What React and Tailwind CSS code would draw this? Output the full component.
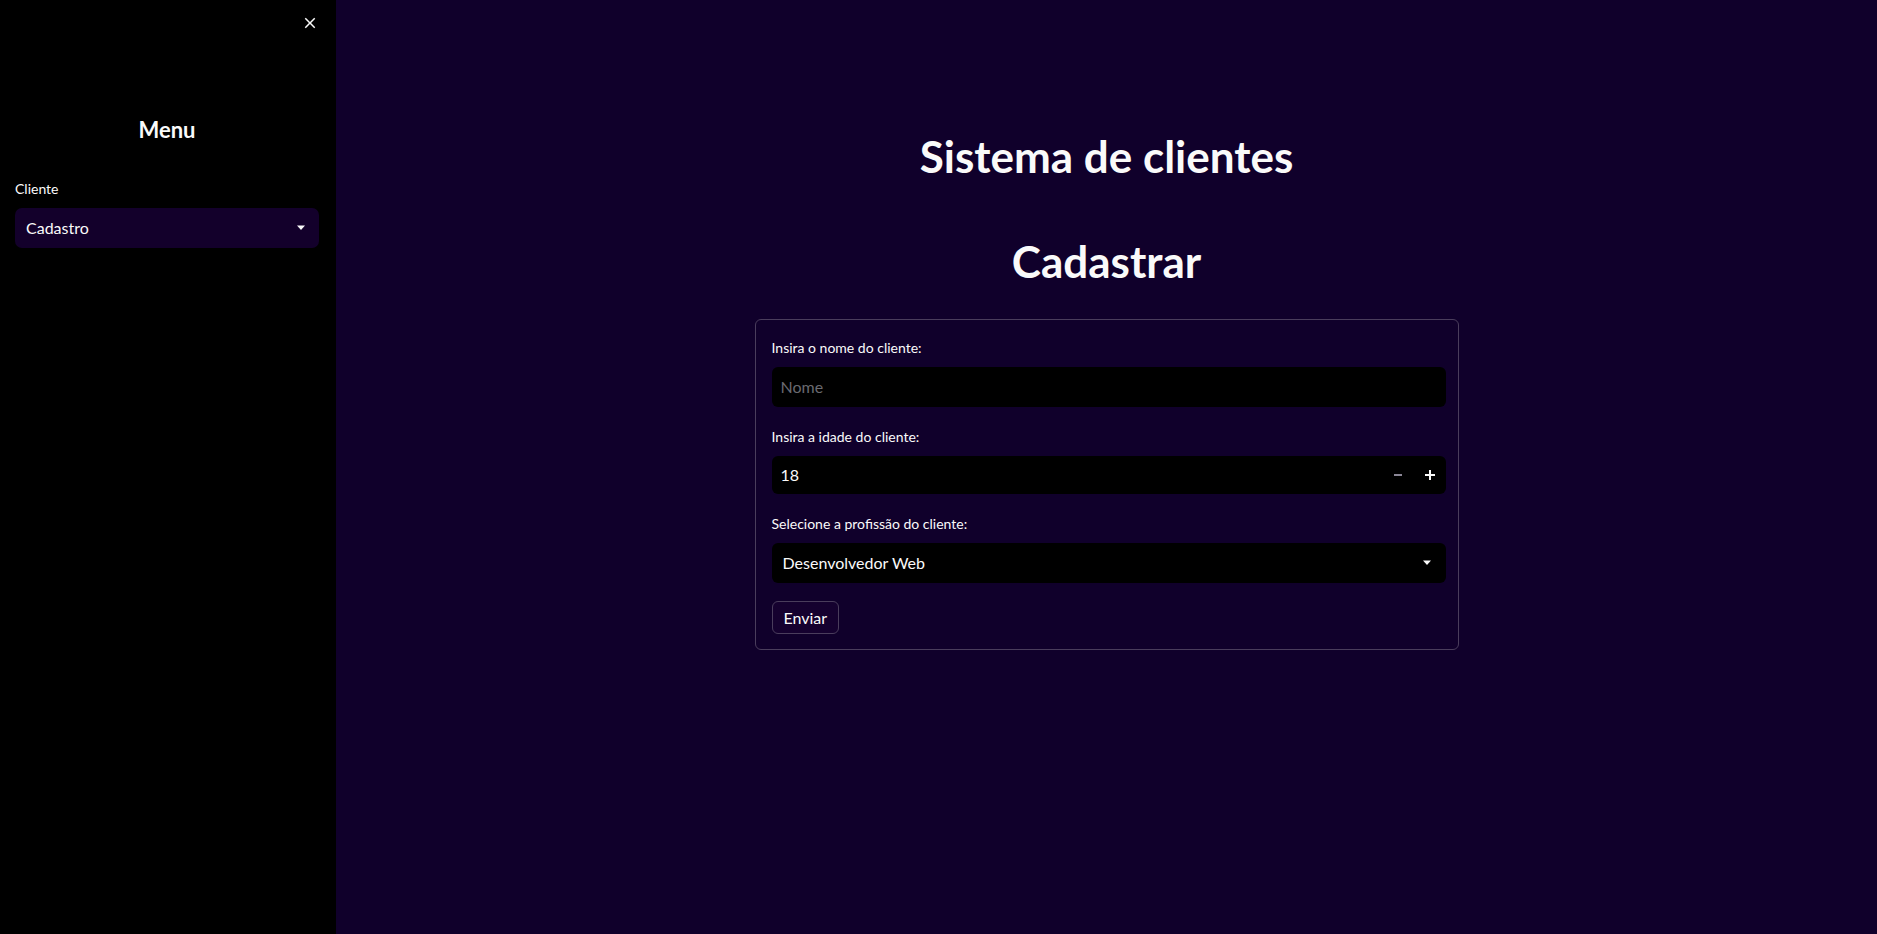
import React from "react";

function Caret() {
  return (
    <svg width="10" height="6" viewBox="0 0 10 6" className="shrink-0">
      <path d="M1 0.5h8L5 5z" fill="#fafafa" />
    </svg>
  );
}

function CloseIcon() {
  return (
    <svg width="18" height="18" viewBox="0 0 24 24">
      <path
        d="M19 6.41L17.59 5 12 10.59 6.41 5 5 6.41 10.59 12 5 17.59 6.41 19 12 13.41 17.59 19 19 17.59 13.41 12z"
        fill="#fafafa"
      />
    </svg>
  );
}

function Label({ children }) {
  return (
    <div className="h-[24px] flex items-center text-[14px] text-[#fafafa]">{children}</div>
  );
}

function Sidebar() {
  return (
    <aside className="w-[336px] shrink-0 bg-black min-h-screen pl-[15px] pr-[17px]">
      <div className="h-[46px] flex items-center justify-end">
        <CloseIcon />
      </div>
      <h2 className="mt-[68px] text-center text-[22px] leading-[32px] font-bold text-[#fafafa]">
        Menu
      </h2>
      <div className="mt-[30px]">
        <Label>Cliente</Label>
        <div className="mt-[8px] h-[40px] rounded-[7px] bg-[#13002b] flex items-center justify-between pl-[11px] pr-[13px]">
          <span className="text-[16px] text-[#fafafa]">Cadastro</span>
          <Caret />
        </div>
      </div>
    </aside>
  );
}

function ClientForm() {
  return (
    <div className="border border-[#4a3d5c] rounded-[6px] pl-[16px] pr-[12px] pt-[15px] pb-[15px]">
      <Label>Insira o nome do cliente:</Label>
      <div className="mt-[8px] h-[40px] rounded-[6px] bg-black flex items-center pl-[9px]">
        <span className="text-[16px] text-[#6a6a70]">Nome</span>
      </div>

      <div className="mt-[17px]">
        <Label>Insira a idade do cliente:</Label>
      </div>
      <div className="mt-[8px] h-[38px] rounded-[6px] bg-black flex items-center pl-[9px]">
        <span className="flex-1 text-[16px] text-[#fafafa]">18</span>
        <div className="w-[32px] h-full flex items-center justify-center">
          <span className="block w-[8px] h-[2px] bg-[#8a8696]" />
        </div>
        <div className="w-[32px] h-full flex items-center justify-center">
          <svg width="10" height="10" viewBox="0 0 10 10">
            <path d="M4 0h2v4h4v2H6v4H4V6H0V4h4z" fill="#fafafa" />
          </svg>
        </div>
      </div>

      <div className="mt-[17px]">
        <Label>Selecione a profissão do cliente:</Label>
      </div>
      <div className="mt-[8px] h-[40px] rounded-[6px] bg-black flex items-center justify-between pl-[11px] pr-[14px]">
        <span className="text-[16px] text-[#fafafa]">Desenvolvedor Web</span>
        <Caret />
      </div>

      <button className="mt-[18px] h-[33px] px-[11px] rounded-[6px] border border-[#4a3d5c] bg-[#15012f] text-[16px] text-[#fafafa]">
        Enviar
      </button>
    </div>
  );
}

export default function App() {
  return (
    <div
      className="flex min-h-screen bg-[#10002b] text-[#fafafa]"
      style={{ fontFamily: "Lato, 'Noto Sans', sans-serif" }}
    >
      <Sidebar />
      <main className="flex-1 flex justify-center">
        <div className="w-[736px] px-[16px] pt-[130px]">
          <h1 className="text-center text-[44px] leading-[52px] font-bold">Sistema de clientes</h1>
          <h2 className="mt-[53px] text-center text-[44px] leading-[52px] font-bold">Cadastrar</h2>
          <div className="mt-[32px]">
            <ClientForm />
          </div>
        </div>
      </main>
    </div>
  );
}
